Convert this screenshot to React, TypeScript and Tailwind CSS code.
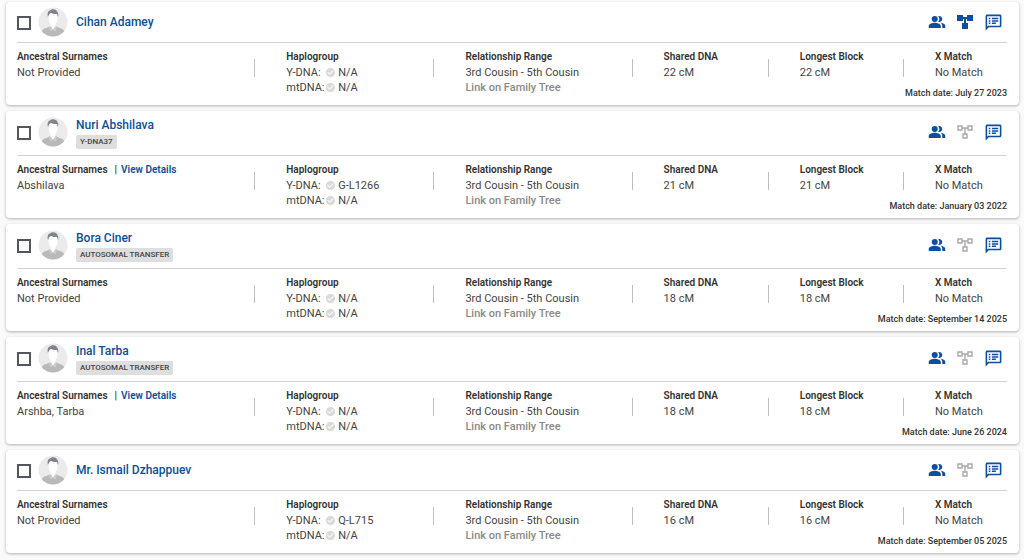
import React from "react";
import {
  MdCheckCircle,
  MdOutlineSpeakerNotes,
  MdPeopleAlt,
} from "react-icons/md";

type Match = {
  id: string;
  name: string;
  badge?: string;
  surnames?: string;
  yDna: string;
  mtDna: string;
  shared: string;
  longest: string;
  inTree?: boolean;
  date: string;
};

const matches: Match[] = [
  {
    id: "adamey",
    name: "Cihan Adamey",
    yDna: "N/A",
    mtDna: "N/A",
    shared: "22 cM",
    longest: "22 cM",
    inTree: true,
    date: "July 27 2023",
  },
  {
    id: "abshilava",
    name: "Nuri Abshilava",
    badge: "Y-DNA37",
    surnames: "Abshilava",
    yDna: "G-L1266",
    mtDna: "N/A",
    shared: "21 cM",
    longest: "21 cM",
    date: "January 03 2022",
  },
  {
    id: "ciner",
    name: "Bora Ciner",
    badge: "AUTOSOMAL TRANSFER",
    yDna: "N/A",
    mtDna: "N/A",
    shared: "18 cM",
    longest: "18 cM",
    date: "September 14 2025",
  },
  {
    id: "tarba",
    name: "Inal Tarba",
    badge: "AUTOSOMAL TRANSFER",
    surnames: "Arshba, Tarba",
    yDna: "N/A",
    mtDna: "N/A",
    shared: "18 cM",
    longest: "18 cM",
    date: "June 26 2024",
  },
  {
    id: "dzhappuev",
    name: "Mr. Ismail Dzhappuev",
    yDna: "Q-L715",
    mtDna: "N/A",
    shared: "16 cM",
    longest: "16 cM",
    date: "September 05 2025",
  },
];

const Avatar = ({ id }: { id: string }) => (
  <svg viewBox="0 0 60 60" className="size-[30px] shrink-0" aria-hidden="true">
    <clipPath id={`avatar-${id}`}>
      <circle cx="30" cy="30" r="29" />
    </clipPath>
    <g clipPath={`url(#avatar-${id})`}>
      <rect width="60" height="60" fill="#ebebeb" />
      <path
        d="M7 60V50c1-5 5-7 10-8l8-4h10l8 4c5 1 9 3 10 8v10z"
        fill="#b9b9b9"
      />
      <path d="M25 32h10v7l-5 7-5-7z" fill="#fafafa" />
      <path d="M24 38l6 8-5 3-3-9zM36 38l-6 8 5 3 3-9z" fill="#cccccc" />
      <ellipse cx="30" cy="22" rx="9" ry="14" fill="#ffffff" />
      <path
        d="M20 20c-2-7 0-12 4-13 4-4 13-3 15 3 2 3 2 6 1 10l-2-6c-4 0-9 0-12-2-3 1-5 4-6 8z"
        fill="#80858a"
      />
    </g>
  </svg>
);

const TreeIcon = ({ filled }: { filled?: boolean }) =>
  filled ? (
    <svg viewBox="0 0 16 14" className="h-[14px] w-4" fill="#0b4f9e">
      <path d="M0 0h6v2h4V0h6v6h-6V4H9v4h2v6H5V8h2V4H6v2H0z" />
    </svg>
  ) : (
    <svg
      viewBox="0 0 16 14"
      className="h-[14px] w-4"
      fill="none"
      stroke="#a9a9a9"
      strokeWidth="1.4"
    >
      <path d="M1 1h4v4H1zM11 1h4v4h-4zM6 9h4v4H6zM5 3h6M8 3v6" />
    </svg>
  );

const Cell = ({
  title,
  extra,
  children,
}: {
  title: string;
  extra?: React.ReactNode;
  children: React.ReactNode;
}) => (
  <div className="group flex min-w-0">
    <span className="mt-[10px] mr-[31px] h-[18px] w-px shrink-0 bg-[#bdbdbd] group-first:hidden" />
    <div className="whitespace-nowrap">
      <h3 className="text-[10px] font-semibold leading-4 text-[#333]">
        {title}
        {extra}
      </h3>
      {children}
    </div>
  </div>
);

const Haplogroup = ({ label, value }: { label: string; value: string }) => (
  <p className="flex items-center">
    <span className="w-[39px]">{label}</span>
    <MdCheckCircle className="mr-[2px] size-[11px] text-[#dadada]" />
    {value}
  </p>
);

const MatchCard = ({ match }: { match: Match }) => (
  <article className="rounded bg-white pr-3 pl-[11px] shadow-[0_1px_3px_rgba(0,0,0,0.3)]">
    <header
      className={`flex items-center border-b border-[#d0d0d0] ${match.badge ? "h-[45px] pb-[2px]" : "h-[41px]"}`}
    >
      <input
        type="checkbox"
        aria-label={`Select ${match.name}`}
        className="mt-[2px] size-[14px] shrink-0 appearance-none border-2 border-[#55555c] checked:bg-[#0b4f9e]"
      />
      <div className="ml-[7px]">
        <Avatar id={match.id} />
      </div>
      <div
        className={`ml-2 flex flex-col items-start ${match.badge ? "pt-[2px]" : ""}`}
      >
        <a
          href="#"
          className="text-[12px] font-medium leading-[16px] text-[#0b4f9e]"
        >
          {match.name}
        </a>
        {match.badge && (
          <span className="mt-[2px] rounded-xs bg-[#dedede] px-1 text-[8px] font-medium leading-[14px] text-[#444]">
            {match.badge}
          </span>
        )}
      </div>
      <div className="ml-auto flex items-center gap-[11px] pr-1 text-[#0b4f9e]">
        <button type="button" aria-label="In common with">
          <MdPeopleAlt className="size-[18px]" />
        </button>
        <button type="button" aria-label="Family tree">
          <TreeIcon filled={match.inTree} />
        </button>
        <button type="button" aria-label="Notes">
          <MdOutlineSpeakerNotes className="size-[19px]" />
        </button>
      </div>
    </header>
    <div className="grid grid-cols-[237fr_179fr_198fr_136fr_135fr_104fr] pt-[6px] text-[11px] leading-[15px] text-[#444]">
      <Cell
        title="Ancestral Surnames"
        extra={
          match.surnames && (
            <>
              <span className="mr-1 ml-[7px]">|</span>
              <a href="#" className="text-[#0b4f9e]">
                View Details
              </a>
            </>
          )
        }
      >
        <p>{match.surnames ?? "Not Provided"}</p>
      </Cell>
      <Cell title="Haplogroup">
        <Haplogroup label="Y-DNA:" value={match.yDna} />
        <Haplogroup label="mtDNA:" value={match.mtDna} />
      </Cell>
      <Cell title="Relationship Range">
        <p>3rd Cousin - 5th Cousin</p>
        <button type="button" className="block font-medium text-[#8a8a85]">
          Link on Family Tree
        </button>
      </Cell>
      <Cell title="Shared DNA">
        <p>{match.shared}</p>
      </Cell>
      <Cell title="Longest Block">
        <p>{match.longest}</p>
      </Cell>
      <Cell title="X Match">
        <p>No Match</p>
      </Cell>
    </div>
    <p className="-mt-2 pb-[6px] text-right text-[9px] font-medium leading-3 text-[#333]">
      Match date: {match.date}
    </p>
  </article>
);

const App = () => {
  return (
    <main className="flex min-h-screen flex-col gap-[6px] bg-[#fafafa] pt-[2px] pr-[5px] pb-1 pl-[6px] font-['Roboto',sans-serif]">
      {matches.map((match) => (
        <MatchCard key={match.id} match={match} />
      ))}
    </main>
  );
};

export default App;
